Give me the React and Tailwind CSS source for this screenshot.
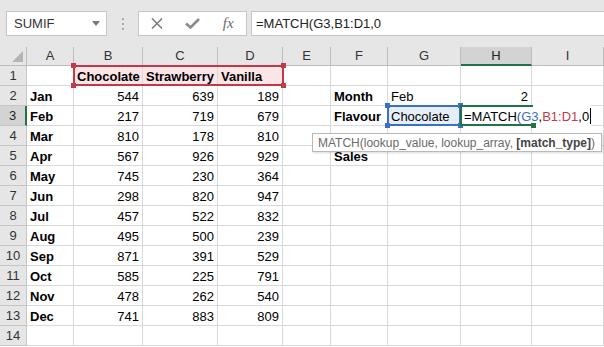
import React from "react";

const cols = ["A", "B", "C", "D", "E", "F", "G", "H", "I"];

const months = ["Jan", "Feb", "Mar", "Apr", "May", "Jun", "Jul", "Aug", "Sep", "Oct", "Nov", "Dec"];
const sales = [
  [544, 639, 189],
  [217, 719, 679],
  [810, 178, 810],
  [567, 926, 929],
  [745, 230, 364],
  [298, 820, 947],
  [457, 522, 832],
  [495, 500, 239],
  [871, 391, 529],
  [585, 225, 791],
  [478, 262, 540],
  [741, 883, 809],
];

// build cell contents: rows[r][c] = { v, bold, right, bg }
function buildRows() {
  const rows = [];
  for (let r = 1; r <= 14; r++) {
    const row = cols.map(() => ({ v: "" }));
    if (r === 1) {
      row[1] = { v: "Chocolate", bold: true, bg: "pink" };
      row[2] = { v: "Strawberry", bold: true, bg: "pink" };
      row[3] = { v: "Vanilla", bold: true, bg: "pink" };
    }
    if (r >= 2 && r <= 13) {
      row[0] = { v: months[r - 2], bold: true };
      sales[r - 2].forEach((n, i) => {
        row[i + 1] = { v: n, right: true };
      });
    }
    if (r === 2) {
      row[5] = { v: "Month", bold: true };
      row[6] = { v: "Feb" };
      row[7] = { v: 2, right: true };
    }
    if (r === 3) {
      row[5] = { v: "Flavour", bold: true };
      row[6] = { v: "Chocolate", bg: "blue" };
    }
    if (r === 5) row[5] = { v: "Sales", bold: true };
    rows.push(row);
  }
  return rows;
}

const rows = buildRows();

function Corner({ className, color }) {
  return <div className={"absolute w-[5px] h-[5px] " + color + " " + className} />;
}

export default function App() {
  return (
    <div className="w-[604px] h-[347px] overflow-hidden bg-white font-['Liberation_Sans',Arial,sans-serif] text-[13px] text-black select-none">
      {/* formula bar */}
      <div className="h-[47px] bg-[#e6e6e6] flex items-start pt-[11px] pl-[6px]">
        <div className="w-[101px] h-[25px] bg-white border border-[#c6c6c6] flex items-center justify-between pl-[7px] pr-[6px]">
          <span className="text-[#333]">SUMIF</span>
          <svg width="8" height="5" viewBox="0 0 8 5">
            <path d="M0 0 H8 L4 5 Z" fill="#777" />
          </svg>
        </div>
        <div className="w-[31px] h-[25px] flex flex-col items-center justify-center gap-[3px]">
          <div className="w-[2px] h-[2px] bg-[#aaa]" />
          <div className="w-[2px] h-[2px] bg-[#aaa]" />
          <div className="w-[2px] h-[2px] bg-[#aaa]" />
        </div>
        <div className="w-[109px] h-[25px] bg-white border border-[#c6c6c6] grid grid-cols-3 items-center justify-items-center">
          <svg width="12" height="11" viewBox="0 0 12 11">
            <path d="M1 0.5 L11 10.5 M11 0.5 L1 10.5" stroke="#7a7a7a" strokeWidth="1.5" />
          </svg>
          <svg width="15" height="11" viewBox="0 0 15 11">
            <path d="M1 5.5 L5.5 9.5 L14 1" stroke="#8a8a8a" strokeWidth="2.6" fill="none" />
          </svg>
          <span className="font-['Liberation_Serif',serif] italic text-[15px] text-[#6a6a6a] leading-none">
            fx
          </span>
        </div>
        <div className="ml-[4px] flex-1 h-[25px] bg-white border border-r-0 border-[#c6c6c6] flex items-center pl-[4px] text-[#222]">
          =MATCH(G3,B1:D1,0
        </div>
      </div>

      {/* sheet */}
      <div className="relative">
        <div className="grid grid-cols-[27px_47px_69px_75px_65px_48px_57px_73px_71px_72px] grid-rows-[19px_repeat(14,20px)]">
          {/* header row */}
          <div className="bg-[#e6e6e6] border-r border-b border-[#bdbdbd] relative">
            <svg className="absolute right-[3px] bottom-[3px]" width="11" height="11" viewBox="0 0 11 11">
              <path d="M11 0 V11 H0 Z" fill="#b5b5b5" />
            </svg>
          </div>
          {cols.map((c) =>
            c === "H" ? (
              <div
                key={c}
                className="bg-[#d3d3d3] border-r border-[#bdbdbd] border-b-2 border-b-[#217346] flex items-center justify-center text-[#222]"
              >
                {c}
              </div>
            ) : (
              <div
                key={c}
                className="bg-[#e6e6e6] border-r border-b border-[#bdbdbd] flex items-center justify-center text-[#333]"
              >
                {c}
              </div>
            )
          )}

          {rows.map((row, ri) => {
            const r = ri + 1;
            return (
              <React.Fragment key={r}>
                {r === 3 ? (
                  <div className="bg-[#d3d3d3] border-b border-[#c6c6c6] border-r-2 border-r-[#217346] flex items-center justify-center text-[#222]">
                    {r}
                  </div>
                ) : (
                  <div className="bg-[#e6e6e6] border-r border-b border-[#c6c6c6] flex items-center justify-center text-[#333]">
                    {r}
                  </div>
                )}
                {row.map((cell, ci) => (
                  <div
                    key={ci}
                    className={
                      "border-r border-b border-[#d9d9d9] flex items-center whitespace-nowrap overflow-visible leading-none pt-[1px] " +
                      (cell.right ? "justify-end pr-[3px] " : "pl-[3px] ") +
                      (cell.bold ? "font-bold " : "") +
                      (cell.bg === "pink" ? "bg-[#fbe5e7] " : "") +
                      (cell.bg === "blue" ? "bg-[#e6eef9] " : "")
                    }
                  >
                    {cell.v}
                  </div>
                ))}
              </React.Fragment>
            );
          })}
        </div>

        {/* B1:D1 reference range */}
        <div className="absolute left-[73px] top-[18px] w-[211px] h-[21px] border-2 border-[#c23a4a] pointer-events-none">
          <Corner color="bg-[#c23a4a]" className="-left-[4px] -top-[4px]" />
          <Corner color="bg-[#c23a4a]" className="-right-[4px] -top-[4px]" />
          <Corner color="bg-[#c23a4a]" className="-left-[4px] -bottom-[4px]" />
          <Corner color="bg-[#c23a4a]" className="-right-[4px] -bottom-[4px]" />
        </div>

        {/* G3 reference */}
        <div className="absolute left-[387px] top-[58px] w-[74px] h-[21px] border-2 border-[#3b6fc6] pointer-events-none">
          <Corner color="bg-[#3b6fc6]" className="-left-[4px] -top-[4px]" />
          <Corner color="bg-[#3b6fc6]" className="-right-[4px] -top-[4px]" />
          <Corner color="bg-[#3b6fc6]" className="-left-[4px] -bottom-[4px]" />
          <Corner color="bg-[#3b6fc6]" className="-right-[4px] -bottom-[4px]" />
        </div>

        {/* H3 in edit mode */}
        <div className="absolute left-[461px] top-[58px] h-[21px] flex items-center pl-[3px] pt-[1px] bg-white whitespace-nowrap leading-none">
          <span>=MATCH</span>
          <span className="text-[#2f5597]">(</span>
          <span className="text-[#3b6fc6]">G3</span>
          <span>,</span>
          <span className="text-[#c23a4a]">B1:D1</span>
          <span>,0</span>
          <span className="w-[1px] h-[16px] bg-black ml-[1px]" />
        </div>
        <div className="absolute left-[460px] top-[58px] w-[73px] h-[21px] border-l-2 border-t-2 border-b-2 border-[#217346] pointer-events-none">
          <Corner color="bg-[#217346]" className="-right-[3px] -bottom-[4px]" />
        </div>

        {/* function tooltip */}
        <div className="absolute left-[312px] top-[86px] w-[290px] h-[19px] bg-white border border-[#b9b9b9] shadow-[1px_1px_2px_rgba(0,0,0,0.15)] flex items-center pl-[5px] text-[12px] text-[#6b6b6b] whitespace-nowrap">
          MATCH(lookup_value, lookup_array,&nbsp;
          <span className="font-bold text-[#444]">[match_type]</span>)
        </div>
      </div>
    </div>
  );
}
